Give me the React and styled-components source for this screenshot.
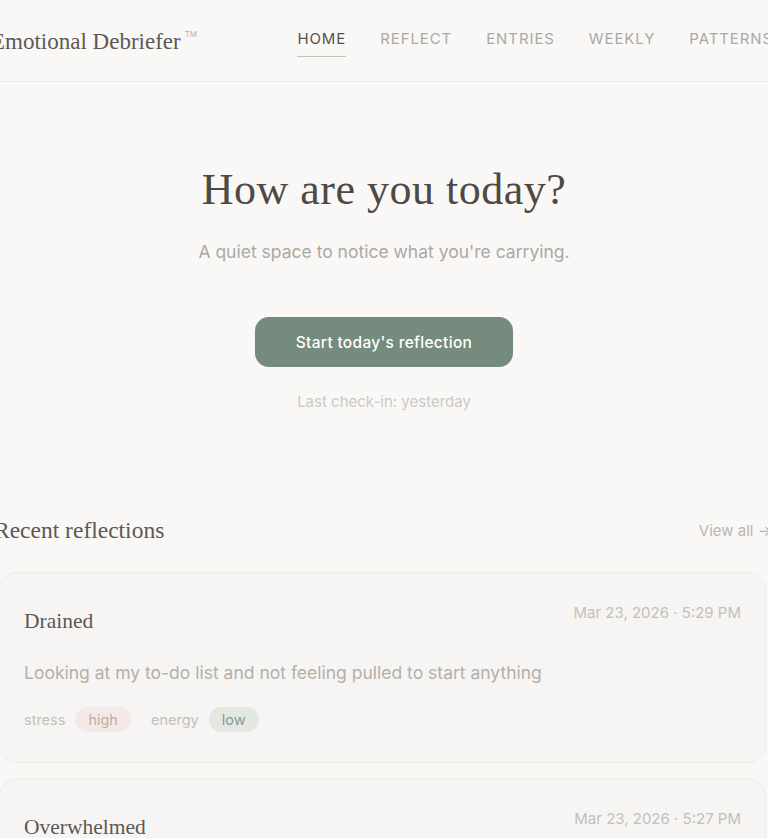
import styled, { createGlobalStyle } from "styled-components";

const GlobalStyle = createGlobalStyle`
  html, body {
    margin: 0;
    padding: 0;
    background: #f9f8f6;
  }
  body {
    font-family: Inter, "Noto Sans", sans-serif;
    overflow: hidden;
  }
  * { box-sizing: border-box; }
`;

const serif = `"Liberation Serif", "Times New Roman", serif`;

const Page = styled.div`
  height: 838px;
  overflow: hidden;
`;

const Header = styled.header`
  height: 82px;
  border-bottom: 1px solid #ece9e5;
`;

const HeaderInner = styled.div`
  height: 81px;
  margin: 0 -5px 0 -9px;
  display: flex;
  align-items: center;
  justify-content: space-between;
`;

const Logo = styled.div`
  font-family: ${serif};
  font-size: 23px;
  line-height: 30px;
  color: #5d5853;
  white-space: nowrap;
  margin-top: -6px;

  sup {
    font-family: Inter, sans-serif;
    font-size: 8px;
    color: #b9b4ae;
    margin-left: 4px;
    vertical-align: 12px;
  }
`;

const Nav = styled.nav`
  display: flex;
  gap: 34px;
`;

const NavLink = styled.a`
  font-size: 15px;
  line-height: 20px;
  letter-spacing: 0.9px;
  text-transform: uppercase;
  padding: 4px 0 7px;
  color: ${(p) => (p.$active ? "#56524d" : "#aca8a2")};
  border-bottom: 1px solid ${(p) => (p.$active ? "#c4c0ba" : "transparent")};
  white-space: nowrap;
  cursor: pointer;
`;

const Hero = styled.section`
  display: flex;
  flex-direction: column;
  align-items: center;
  padding-top: 82px;
`;

const Title = styled.h1`
  margin: 0;
  font-family: ${serif};
  font-weight: normal;
  font-size: 44px;
  line-height: 52px;
  color: #4d4945;
  letter-spacing: 0.5px;
`;

const Subtitle = styled.p`
  margin: 23px 0 0;
  font-size: 17.5px;
  line-height: 26px;
  color: #aca8a2;
`;

const StartButton = styled.button`
  margin-top: 52px;
  height: 50px;
  padding: 0 41px;
  border: none;
  border-radius: 14px;
  background: #758b7d;
  color: #ffffff;
  font-family: Inter, sans-serif;
  font-size: 15.5px;
  font-weight: 500;
  letter-spacing: 0.3px;
  cursor: pointer;
`;

const LastCheck = styled.p`
  margin: 24px 0 0;
  font-size: 15px;
  line-height: 22px;
  color: #ccc8c3;
`;

const Recent = styled.section`
  margin-top: 101px;
`;

const SectionHead = styled.div`
  display: flex;
  align-items: center;
  justify-content: space-between;
  margin: 0 -4px 0 -6px;
  height: 32px;
`;

const SectionTitle = styled.h2`
  margin: 0;
  font-family: ${serif};
  font-weight: normal;
  font-size: 23.5px;
  line-height: 32px;
  color: #5d5853;
`;

const ViewAll = styled.a`
  font-size: 15px;
  color: #bbb6b0;
  white-space: nowrap;
  cursor: pointer;
`;

const CardList = styled.div`
  margin: 26px 2px 0 -1px;
  display: flex;
  flex-direction: column;
  gap: 15px;
`;

const Card = styled.article`
  background: #f7f5f3;
  border: 1px solid #efece8;
  border-radius: 18px;
  padding: 27px 24px 30px;
`;

const CardTop = styled.div`
  display: flex;
  justify-content: space-between;
  align-items: flex-start;
`;

const Mood = styled.h3`
  margin: 0;
  padding-top: 2px;
  font-family: ${serif};
  font-weight: normal;
  font-size: 21.5px;
  line-height: 38px;
  color: #5d5853;
`;

const Stamp = styled.span`
  margin-top: 2px;
  font-size: 15px;
  line-height: 22px;
  color: #c4bfb9;
`;

const Note = styled.p`
  margin: 20px 0 0;
  font-size: 17.5px;
  line-height: 26px;
  color: #b3afa9;
`;

const Tags = styled.div`
  margin-top: 21px;
  display: flex;
  align-items: center;
  gap: 20px;
`;

const Tag = styled.div`
  display: flex;
  align-items: center;
  gap: 10px;
`;

const TagLabel = styled.span`
  font-size: 14.5px;
  color: #c3bfb9;
`;

const Pill = styled.span`
  height: 25px;
  display: inline-flex;
  align-items: center;
  padding: 0 13px;
  border-radius: 13px;
  font-size: 14.5px;
  background: ${(p) => (p.$tone === "warm" ? "#f3e9e6" : "#e4e8e3")};
  color: ${(p) => (p.$tone === "warm" ? "#c8aaa2" : "#8c978e")};
`;

const entries = [
  {
    mood: "Drained",
    stamp: "Mar 23, 2026 · 5:29 PM",
    note: "Looking at my to-do list and not feeling pulled to start anything",
    stress: "high",
    energy: "low",
  },
  {
    mood: "Overwhelmed",
    stamp: "Mar 23, 2026 · 5:27 PM",
    note: "Too many things landing at once and no room to think",
    stress: "high",
    energy: "low",
  },
];

const navItems = ["Home", "Reflect", "Entries", "Weekly", "Patterns"];

export default function App() {
  return (
    <Page>
      <GlobalStyle />
      <Header>
        <HeaderInner>
          <Logo>
            Emotional Debriefer<sup>TM</sup>
          </Logo>
          <Nav>
            {navItems.map((item, i) => (
              <NavLink key={item} $active={i === 0}>
                {item}
              </NavLink>
            ))}
          </Nav>
        </HeaderInner>
      </Header>

      <Hero>
        <Title>How are you today?</Title>
        <Subtitle>A quiet space to notice what you're carrying.</Subtitle>
        <StartButton>Start today's reflection</StartButton>
        <LastCheck>Last check-in: yesterday</LastCheck>
      </Hero>

      <Recent>
        <SectionHead>
          <SectionTitle>Recent reflections</SectionTitle>
          <ViewAll>View all →</ViewAll>
        </SectionHead>
        <CardList>
          {entries.map((e) => (
            <Card key={e.stamp}>
              <CardTop>
                <Mood>{e.mood}</Mood>
                <Stamp>{e.stamp}</Stamp>
              </CardTop>
              <Note>{e.note}</Note>
              <Tags>
                <Tag>
                  <TagLabel>stress</TagLabel>
                  <Pill $tone="warm">{e.stress}</Pill>
                </Tag>
                <Tag>
                  <TagLabel>energy</TagLabel>
                  <Pill $tone="cool">{e.energy}</Pill>
                </Tag>
              </Tags>
            </Card>
          ))}
        </CardList>
      </Recent>
    </Page>
  );
}
